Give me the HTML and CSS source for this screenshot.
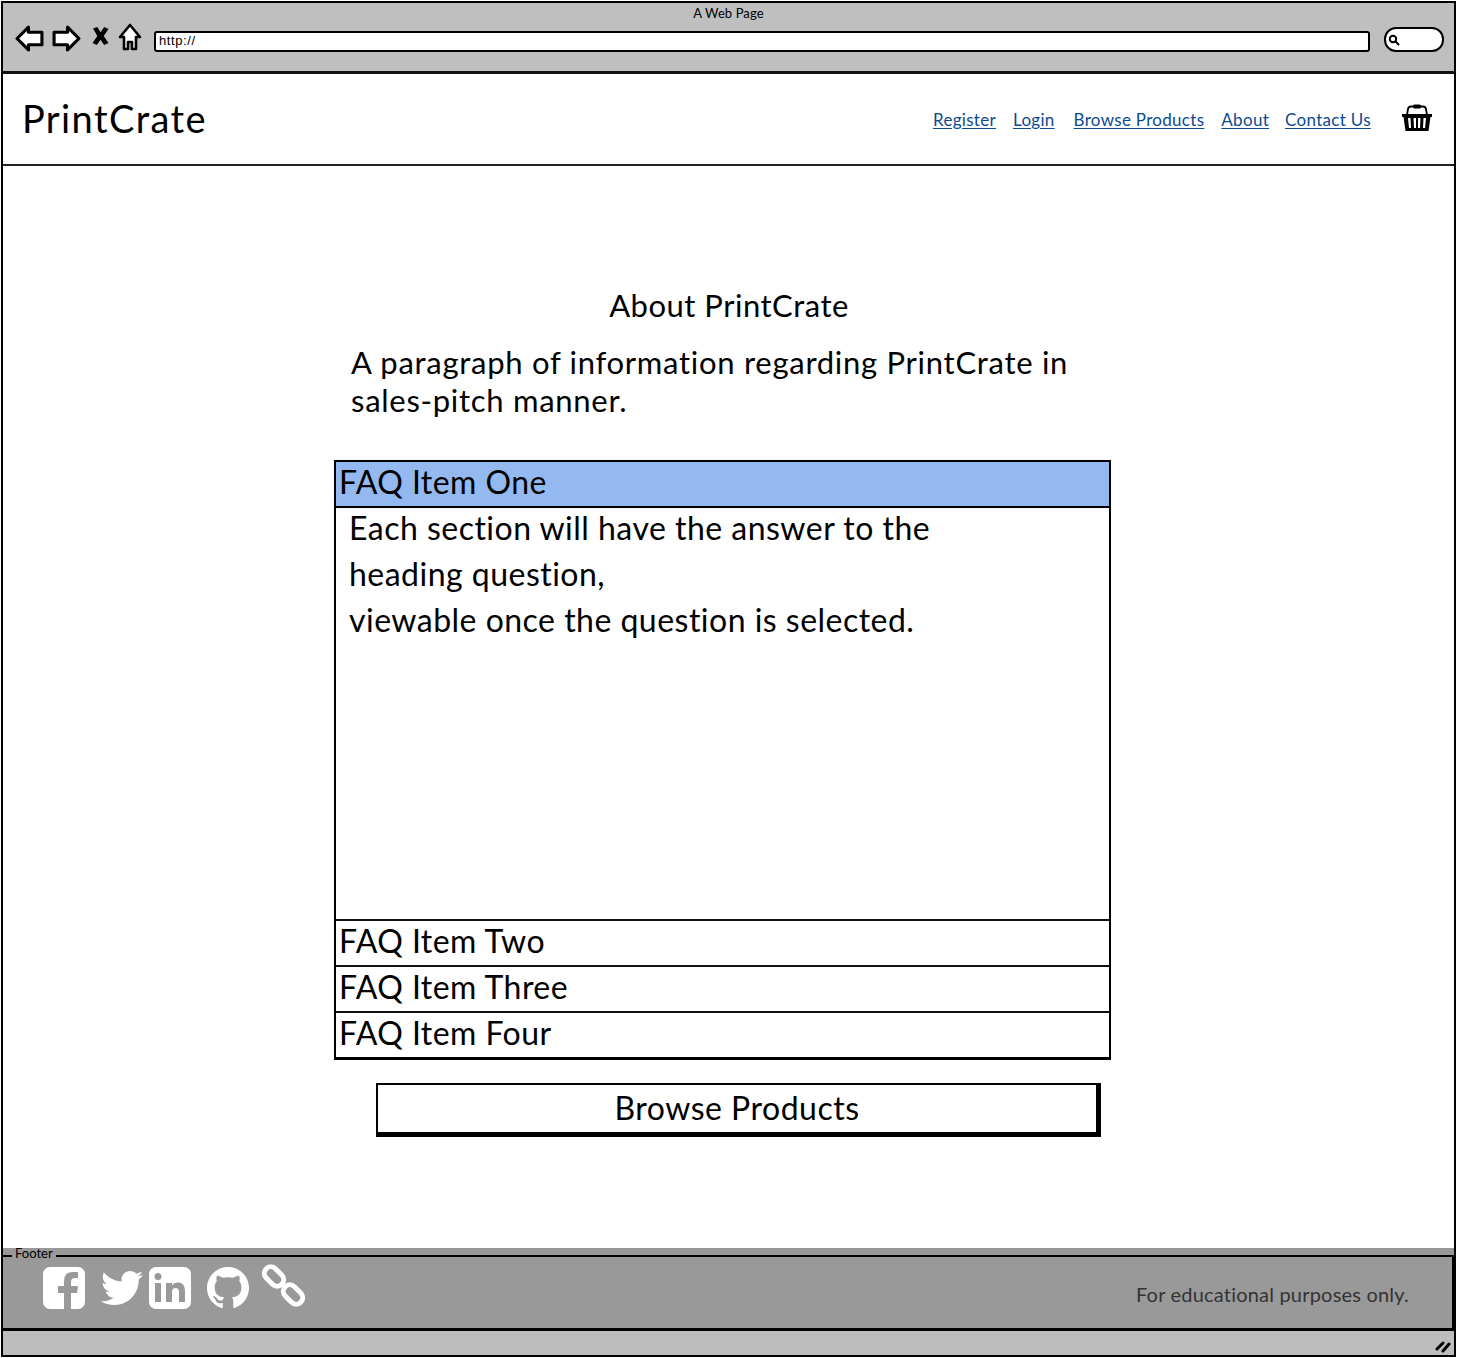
FILE: index.html
```html
<!DOCTYPE html>
<html lang="en">
<head>
<meta charset="utf-8">
<title>PrintCrate</title>
<link rel="stylesheet" href="styles.css">
</head>
<body>
<div class="frame">
  <div class="chrome">
    <div class="page-title">A Web Page</div>
    <div class="toolbar">
      <svg class="nav-icon back" viewBox="0 0 28 26"><path d="M2 13 L13 2 L13 7 L26 7 L26 19 L13 19 L13 24 Z"/></svg>
      <svg class="nav-icon forward" viewBox="0 0 28 26"><path d="M26 13 L15 2 L15 7 L2 7 L2 19 L15 19 L15 24 Z"/></svg>
      <svg class="stop-icon" viewBox="0 0 16 18"><path d="M1 2 L5 0.500 L8 5.500 L11.500 0.500 L15.500 2.500 L11 9 L15.500 15.500 L11.500 17.500 L8 12.500 L4.500 17.500 L0.500 15.500 L5 9 Z"/></svg>
      <svg class="home-icon" viewBox="0 0 24 28"><path d="M12 2 L22 14 L18 14 L18 26 L14 26 L14 19 L10 19 L10 26 L6 26 L6 14 L2 14 Z"/></svg>
      <div class="address">http://</div>
      <div class="search">
        <svg class="search-icon" viewBox="0 0 12 12"><circle cx="5" cy="5" r="3.200"/><path d="M7.500 7.500 L11 11"/></svg>
      </div>
    </div>
  </div>
  <header class="site-header">
    <div class="brand">PrintCrate</div>
    <nav class="nav">
      <a class="nav-link link-register">Register</a>
      <a class="nav-link link-login">Login</a>
      <a class="nav-link link-browse">Browse Products</a>
      <a class="nav-link link-about">About</a>
      <a class="nav-link link-contact">Contact Us</a>
    </nav>
    <svg class="basket" viewBox="0 0 32 28">
      <path class="basket-handle" d="M6 11 L7 5 Q7.500 2.500 10 2.500 L22 2.500 Q24.500 2.500 25 5 L26 11"/>
      <rect class="basket-grip" x="12" y="0.500" width="8" height="4" rx="1.500"/>
      <path class="basket-body" fill-rule="evenodd" d="M1 10 L31 10 L31 13 L29.500 13 L27.500 27 L4.500 27 L2.500 13 L1 13 Z M7 14 L8 24 L10 24 L9.500 14 Z M12.500 14 L13 24 L15 24 L15 14 Z M17 14 L17 24 L19 24 L19.500 14 Z M22.500 14 L22 24 L24 24 L25 14 Z"/>
    </svg>
  </header>
  <main class="content">
    <div class="column">
      <h1 class="heading">About PrintCrate</h1>
      <p class="intro">A paragraph of information regarding PrintCrate in<br>sales-pitch manner.</p>
      <div class="accordion">
        <div class="faq-head selected">FAQ Item One</div>
        <div class="faq-panel">
          <div>Each section will have the answer to the</div>
          <div>heading question,</div>
          <div>viewable once the question is selected.</div>
        </div>
        <div class="faq-head">FAQ Item Two</div>
        <div class="faq-head">FAQ Item Three</div>
        <div class="faq-head">FAQ Item Four</div>
      </div>
      <button class="browse-button">Browse Products</button>
    </div>
  </main>
  <footer class="footer">
    <span class="footer-label">Footer</span>
    <div class="footer-box">
      <div class="socials">
        <svg class="social fb" viewBox="0 0 42 42"><path fill-rule="evenodd" d="M7 0 H35 A7 7 0 0 1 42 7 V35 A7 7 0 0 1 35 42 H28 V26 H34 L35 19 H28 V15 Q28 11 32 11 H35 V5 H30 Q21 5 21 14 V19 H15 V26 H21 V42 H7 A7 7 0 0 1 0 35 V7 A7 7 0 0 1 7 0 Z"/></svg>
        <svg class="social tw" viewBox="0 0 512 512"><path d="M459.37 151.716c.325 4.548.325 9.097.325 13.645 0 138.72-105.583 298.558-298.558 298.558-59.452 0-114.68-17.219-161.137-47.106 8.447.974 16.568 1.299 25.34 1.299 49.055 0 94.213-16.568 130.274-44.832-46.132-.975-84.792-31.188-98.112-72.772 6.498.974 12.995 1.624 19.818 1.624 9.421 0 18.843-1.3 27.614-3.573-48.081-9.747-84.143-51.98-84.143-102.985v-1.299c13.969 7.797 30.214 12.67 47.431 13.319-28.264-18.843-46.781-51.005-46.781-87.391 0-19.492 5.197-37.36 14.294-52.954 51.655 63.675 129.3 105.258 216.365 109.807-1.624-7.797-2.599-15.918-2.599-24.04 0-57.828 46.782-104.934 104.934-104.934 30.213 0 57.502 12.67 76.67 33.137 23.715-4.548 46.456-13.32 66.599-25.34-7.798 24.366-24.366 44.833-46.132 57.827 21.117-2.273 41.584-8.122 60.426-16.243-14.292 20.791-32.161 39.308-52.628 54.253z"/></svg>
        <svg class="social li" viewBox="0 0 42 42"><path fill-rule="evenodd" d="M7 0 H35 A7 7 0 0 1 42 7 V35 A7 7 0 0 1 35 42 H7 A7 7 0 0 1 0 35 V7 A7 7 0 0 1 7 0 Z M6 16 V35 H12 V16 Z M9 6 A3.500 3.500 0 1 0 9 13 A3.500 3.500 0 1 0 9 6 Z M17 16 V35 H23 V25 Q23 21 26.500 21 Q30 21 30 25 V35 H36 V24 Q36 15.500 29 15.500 Q25 15.500 23 18.500 V16 Z"/></svg>
        <svg class="social gh" viewBox="0 0 16 16"><path d="M8 0C3.580 0 0 3.580 0 8c0 3.540 2.290 6.530 5.470 7.590.4.070.55-.17.55-.38 0-.19-.01-.82-.01-1.490-2.010.37-2.530-.49-2.690-.94-.09-.23-.48-.94-.82-1.130-.28-.15-.68-.52-.01-.53.63-.01 1.080.58 1.230.82.720 1.210 1.870.87 2.330.66.070-.52.280-.87.510-1.070-1.780-.2-3.640-.89-3.640-3.950 0-.87.310-1.590.82-2.150-.08-.2-.36-1.020.08-2.120 0 0 .67-.21 2.200.82.640-.18 1.320-.27 2-.27.680 0 1.360.09 2 .27 1.530-1.040 2.200-.82 2.200-.82.440 1.100.160 1.920.080 2.120.510.560.820 1.270.820 2.150 0 3.070-1.870 3.750-3.650 3.950.290.250.540.730.540 1.480 0 1.070-.01 1.930-.01 2.200 0 .210.150.460.550.380A8.013 8.013 0 0016 8c0-4.420-3.580-8-8-8z"/></svg>
        <svg class="social chain" viewBox="0 0 46 46">
          <rect x="2" y="7" width="22" height="13" rx="6.500" transform="rotate(45 13 13.500)"/>
          <rect x="21" y="25" width="22" height="13" rx="6.500" transform="rotate(45 32 31.500)"/>
        </svg>
      </div>
      <div class="edu">For educational purposes only.</div>
    </div>
  </footer>
  <div class="status">
    <svg class="grip" viewBox="0 0 16 14"><path d="M2 10 L8 4 M8 12 L14 5"/></svg>
  </div>
</div>
</body>
</html>
```
FILE: styles.css
```css
* { box-sizing: border-box; }
html, body { margin: 0; padding: 0; background: #fff; }
body { font-family: "Lato", "Noto Sans", sans-serif; color: #000; font-variant-ligatures: none; }
.frame {
  margin: 1px 1px 0 1px;
  width: 1455px;
  height: 1356px;
  border: 2px solid #000;
  display: flex;
  flex-direction: column;
  overflow: hidden;
}
.chrome {
  height: 71px;
  flex: none;
  background: #bfbfbf;
  border-bottom: 3px solid #111;
}
.page-title {
  text-align: center;
  font-size: 13px;
  letter-spacing: 0.1px;
  line-height: 16px;
  padding-top: 2px;
}
.toolbar {
  display: flex;
  align-items: center;
  margin-top: 1px;
  padding-left: 12px;
  height: 32px;
}
.nav-icon { width: 29px; height: 27px; flex: none; fill: #fff; stroke: #000; stroke-width: 3; stroke-linejoin: round; }
.forward { margin-left: 8px; }
.stop-icon { width: 17px; height: 20px; margin-left: 11px; margin-top: -5px; fill: #000; flex: none; }
.home-icon { width: 24px; height: 28px; margin-left: 9px; margin-top: -2px; flex: none; fill: #fff; stroke: #000; stroke-width: 2.600; stroke-linejoin: round; }
.address {
  margin-left: 12px;
  margin-top: 6px;
  width: 1216px;
  height: 21px;
  background: #fff;
  border: 2.500px solid #000;
  border-radius: 3px;
  font-family: "Liberation Sans", sans-serif;
  font-size: 13px;
  line-height: 16px;
  letter-spacing: 0.6px;
  padding-left: 3px;
  flex: none;
}
.search {
  margin-left: 14px;
  margin-top: 3px;
  width: 60px;
  height: 25px;
  background: #fff;
  border: 2.500px solid #000;
  border-radius: 12px;
  display: flex;
  align-items: center;
  padding-left: 2px;
  flex: none;
}
.search-icon { width: 12px; height: 12px; fill: none; stroke: #000; stroke-width: 2; }
.site-header {
  height: 92px;
  flex: none;
  border-bottom: 2px solid #222;
  display: flex;
  align-items: center;
  padding-left: 19px;
  background: #fff;
}
.brand { font-size: 38px; letter-spacing: 1.400px; line-height: 46px; width: 911px; flex: none; margin-top: -2px; }
.nav { display: flex; align-items: center; flex: none; width: 438px; font-size: 17px; letter-spacing: 0.300px; }
.nav-link { color: #0b4a92; text-decoration: underline; text-underline-offset: 2px; flex: none; }
.link-login { margin-left: 17px; }
.link-browse { margin-left: 19px; }
.link-about { margin-left: 17px; }
.link-contact { margin-left: 16px; }
.basket { width: 32px; height: 28px; flex: none; margin-left: 30px; margin-top: -2px; }
.basket-handle { fill: none; stroke: #000; stroke-width: 1.800; }
.basket-grip, .basket-body { fill: #000; }
.content { flex: 1; background: #fff; padding: 117px 0 0 331px; min-height: 0; }
.column { width: 790px; }
.heading { font-size: 31px; letter-spacing: 0.500px; font-weight: 400; line-height: 44px; margin: 0; text-align: center; }
.intro { font-size: 31px; letter-spacing: 0.720px; line-height: 38px; margin: 16px 0 0 17px; white-space: nowrap; }
.accordion {
  width: 777px;
  margin-top: 41px;
  border: 2px solid #000;
  border-bottom-width: 3px;
}
.faq-head {
  height: 46px;
  font-size: 32px;
  letter-spacing: 0.450px;
  line-height: 40px;
  padding-left: 3px;
  border-top: 2px solid #111;
  background: #fff;
}
.faq-head:first-child { border-top: 0; height: 44px; }
.faq-head.selected { background: #94b9f0; border-bottom: 2px solid #000; height: 46px; }
.faq-panel {
  height: 414px;
  padding-left: 13px;
  font-size: 32px;
  letter-spacing: 0.480px;
  line-height: 46px;
  margin-top: -3px;
}
.browse-button {
  display: block;
  margin: 23px 0 0 42px;
  width: 725px;
  height: 54px;
  background: #fff;
  border: 2px solid #000;
  border-right-width: 5px;
  border-bottom-width: 5px;
  font-family: inherit;
  font-size: 32px;
  letter-spacing: 0.500px;
  padding: 0 0 2px 0;
  color: #000;
}
.footer {
  height: 83px;
  flex: none;
  background: #999;
  padding-top: 7px;
  position: relative;
}
.footer-label {
  position: absolute;
  left: 9px;
  top: 0;
  padding: 0 3px;
  background: #999;
  font-size: 13px;
  line-height: 11px;
}
.footer-box {
  height: 76px;
  border: 2px solid #000;
  border-bottom-width: 3px;
  border-left-width: 0;
  display: flex;
  align-items: flex-start;
  justify-content: space-between;
  padding: 0 43px 0 40px;
}
.socials { display: flex; align-items: flex-start; }
.social { flex: none; fill: #fff; }
.fb { width: 42px; height: 42px; margin-top: 10px; }
.tw { width: 42px; height: 42px; margin: 10px 0 0 16px; }
.li { width: 42px; height: 42px; margin: 10px 0 0 6px; }
.gh { width: 42px; height: 42px; margin: 10px 0 0 16px; }
.chain { width: 46px; height: 46px; margin: 6px 0 0 12px; fill: none; stroke: #fff; stroke-width: 5; }
.edu { font-size: 20px; letter-spacing: 0.200px; color: #333; margin-top: 24px; line-height: 26px; }
.status {
  flex: none;
  height: 24px;
  background: #bdbdbd;
  display: flex;
  justify-content: flex-end;
  align-items: flex-end;
  padding: 0 3px 2px 0;
}
.grip { width: 16px; height: 14px; fill: none; stroke: #000; stroke-width: 3; stroke-linecap: round; }
```
